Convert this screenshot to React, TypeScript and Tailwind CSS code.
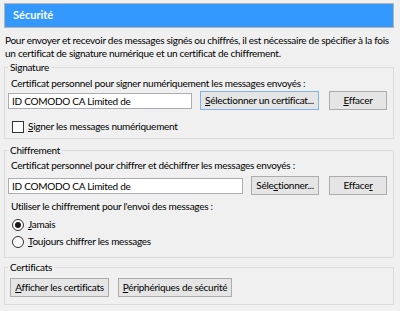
import type { ReactNode } from "react";

const Btn = ({ children, className = "" }: { children: ReactNode; className?: string }) => (
  <button
    type="button"
    className={`h-[19px] shrink-0 whitespace-nowrap border bg-[#e5e5e5] px-0 text-center leading-[17px] text-black ${className}`}
  >
    {children}
  </button>
);

const Field = ({ value, className = "" }: { value: string; className?: string }) => (
  <div className={`flex h-[16px] items-center whitespace-nowrap border border-[#abadb3] bg-white pl-[3px] leading-[14px] text-black ${className}`}>
    {value}
  </div>
);

const U = ({ children }: { children: ReactNode }) => <span className="underline underline-offset-1">{children}</span>;

export default function App() {
  return (
    <div className="h-[311px] w-[400px] overflow-hidden whitespace-nowrap bg-[#f0f0f0] pl-[4px] pr-[6px] pt-[3px] font-['Lato',sans-serif] text-[10px] tracking-[-0.27px] text-black">
      <div className="flex h-[25px] items-center border border-[#b4b4b4] bg-[#3399ff] pl-[8px] text-[11px] font-bold tracking-normal text-white">
        Sécurité
      </div>

      <p className="mt-[6px] pl-[1px] leading-[13px]">
        Pour envoyer et recevoir des messages signés ou chiffrés, il est nécessaire de spécifier à la fois
        <br />
        un certificat de signature numérique et un certificat de chiffrement.
      </p>

      <fieldset className="mt-[1px] border border-[#dcdcdc] pb-[5px] pl-[3px] pr-[5px]">
        <legend className="px-[2px] leading-[13px]">Signature</legend>
        <div className="mt-[3px] pl-[3px] leading-[13px]">
          Certificat personnel pour signer numériquement les messages envoyés :
        </div>
        <div className="mt-[1px] flex items-center">
          <Field value="ID COMODO CA Limited de" className="w-[184px]" />
          <Btn className="ml-[8px] w-[119px] border-[#7eb4ea]">
            <U>S</U>électionner un certificat...
          </Btn>
          <Btn className="ml-[10px] w-[58px] border-[#acacac]">
            <U>E</U>ffacer
          </Btn>
        </div>
        <div className="mt-[10px] flex items-center pl-[4px] leading-[13px]">
          <span className="h-[12px] w-[12px] border border-[#333333] bg-white" />
          <span className="ml-[4px]">
            <U>S</U>igner les messages numériquement
          </span>
        </div>
      </fieldset>

      <fieldset className="mt-[5px] border border-[#dcdcdc] pb-[9px] pl-[3px] pr-[5px]">
        <legend className="px-[2px] leading-[13px]">Chiffrement</legend>
        <div className="mt-[2px] pl-[3px] leading-[13px]">
          Certificat personnel pour chiffrer et déchiffrer les messages envoyés :
        </div>
        <div className="mt-[4px] flex items-center">
          <Field value="ID COMODO CA Limited de" className="w-[235px]" />
          <Btn className="ml-[8px] w-[68px] border-[#acacac]">
            Séle<U>c</U>tionner...
          </Btn>
          <Btn className="ml-[10px] w-[58px] border-[#acacac]">
            Efface<U>r</U>
          </Btn>
        </div>
        <div className="mt-[5px] pl-[3px] leading-[13px]">Utiliser le chiffrement pour l'envoi des messages :</div>
        <div className="mt-[5px] flex items-center pl-[4px] leading-[13px]">
          <span className="flex h-[12px] w-[12px] items-center justify-center rounded-full border border-[#333333] bg-white">
            <span className="h-[6px] w-[6px] rounded-full bg-[#1a1a1a]" />
          </span>
          <span className="ml-[4px]">
            <U>J</U>amais
          </span>
        </div>
        <div className="mt-[4px] flex items-center pl-[4px] leading-[13px]">
          <span className="h-[12px] w-[12px] rounded-full border border-[#333333] bg-white" />
          <span className="ml-[4px]">
            <U>T</U>oujours chiffrer les messages
          </span>
        </div>
      </fieldset>

      <fieldset className="mt-[3px] border border-[#dcdcdc] pb-[7px] pl-[3px] pr-[5px]">
        <legend className="px-[2px] leading-[13px]">Certificats</legend>
        <div className="mt-[4px] flex items-center">
          <Btn className="ml-[2px] w-[99px] border-[#acacac]">
            <U>A</U>fficher les certificats
          </Btn>
          <Btn className="ml-[9px] w-[114px] border-[#acacac]">
            <U>P</U>ériphériques de sécurité
          </Btn>
        </div>
      </fieldset>
    </div>
  );
}
